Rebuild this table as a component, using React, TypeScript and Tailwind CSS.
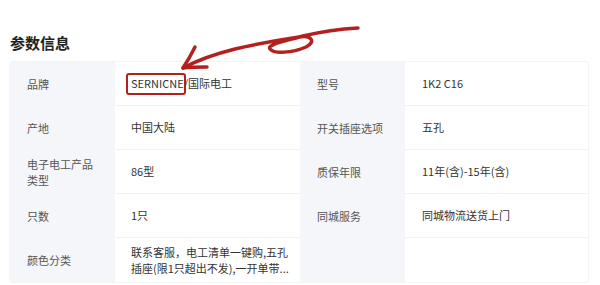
import React from "react";

const rows: { label: string; value: React.ReactNode }[][] = [
  [
    {
      label: "品牌",
      value: (
        <span>
          <span className="relative">
            SERNICNE
            <span className="absolute -left-[5px] -right-[2px] -top-[2px] -bottom-[4px] border-2 border-[#b3201d] rounded-[3px]" />
          </span>
          /国际电工
        </span>
      ),
    },
    { label: "型号", value: "1K2 C16" },
  ],
  [
    { label: "产地", value: "中国大陆" },
    { label: "开关插座选项", value: "五孔" },
  ],
  [
    { label: "电子电工产品类型", value: "86型" },
    { label: "质保年限", value: "11年(含)-15年(含)" },
  ],
  [
    { label: "只数", value: "1只" },
    { label: "同城服务", value: "同城物流送货上门" },
  ],
  [
    {
      label: "颜色分类",
      value: (
        <span className="block leading-[16px] whitespace-nowrap">
          联系客服，电工清单一键购,五孔
          <br />
          插座(限1只超出不发),一开单带...
        </span>
      ),
    },
    { label: "", value: "" },
  ],
];

function Arrow() {
  return (
    <svg
      className="absolute left-0 top-0 pointer-events-none"
      width="600"
      height="285"
      viewBox="0 0 600 285"
      fill="none"
    >
      <path
        d="M358 28 C340 29 320 32 303 36 C290 40 266 44 270 49 C274 54 292 53 306 47 C316 42 312 35 299 37 C280 40 255 44 235 49 C215 54 196 61 183 68"
        stroke="#b3201d"
        strokeWidth="3.5"
        strokeLinecap="round"
        strokeLinejoin="round"
      />
      <path
        d="M195 47 C191 55 187 62 183 68 C191 67 199 67 207 67"
        stroke="#b3201d"
        strokeWidth="3.5"
        strokeLinecap="round"
        strokeLinejoin="round"
      />
    </svg>
  );
}

export default function App() {
  return (
    <div
      className="relative w-[600px] h-[285px] bg-white overflow-hidden px-[9px] pt-[33px]"
      style={{ fontFamily: '"Noto Sans CJK SC", "Noto Sans", sans-serif' }}
    >
      <h2 className="text-[15px] leading-[20px] font-bold text-[#222] pl-[1px]">参数信息</h2>
      <div className="mt-[8px] w-[580px] border border-[#f3f4f6] rounded-[4px] overflow-hidden grid grid-cols-[105px_185px_105px_183px] text-[11px] text-[#333]">
        {rows.map((row, ri) =>
          row.map((cell, ci) => (
            <React.Fragment key={`${ri}-${ci}`}>
              <div className="bg-[#f4f6f9] flex items-center pl-[17px] pr-[14px] leading-[16px] text-[#555] h-[44px]">
                {cell.label}
              </div>
              <div
                className={`flex items-center h-[44px] ${ci === 0 ? "pl-[16px]" : "pl-[17px]"} ${
                  ri < rows.length - 1 ? "border-b border-[#f1f2f4]" : ""
                }`}
              >
                {cell.value}
              </div>
            </React.Fragment>
          ))
        )}
      </div>
      <Arrow />
    </div>
  );
}
